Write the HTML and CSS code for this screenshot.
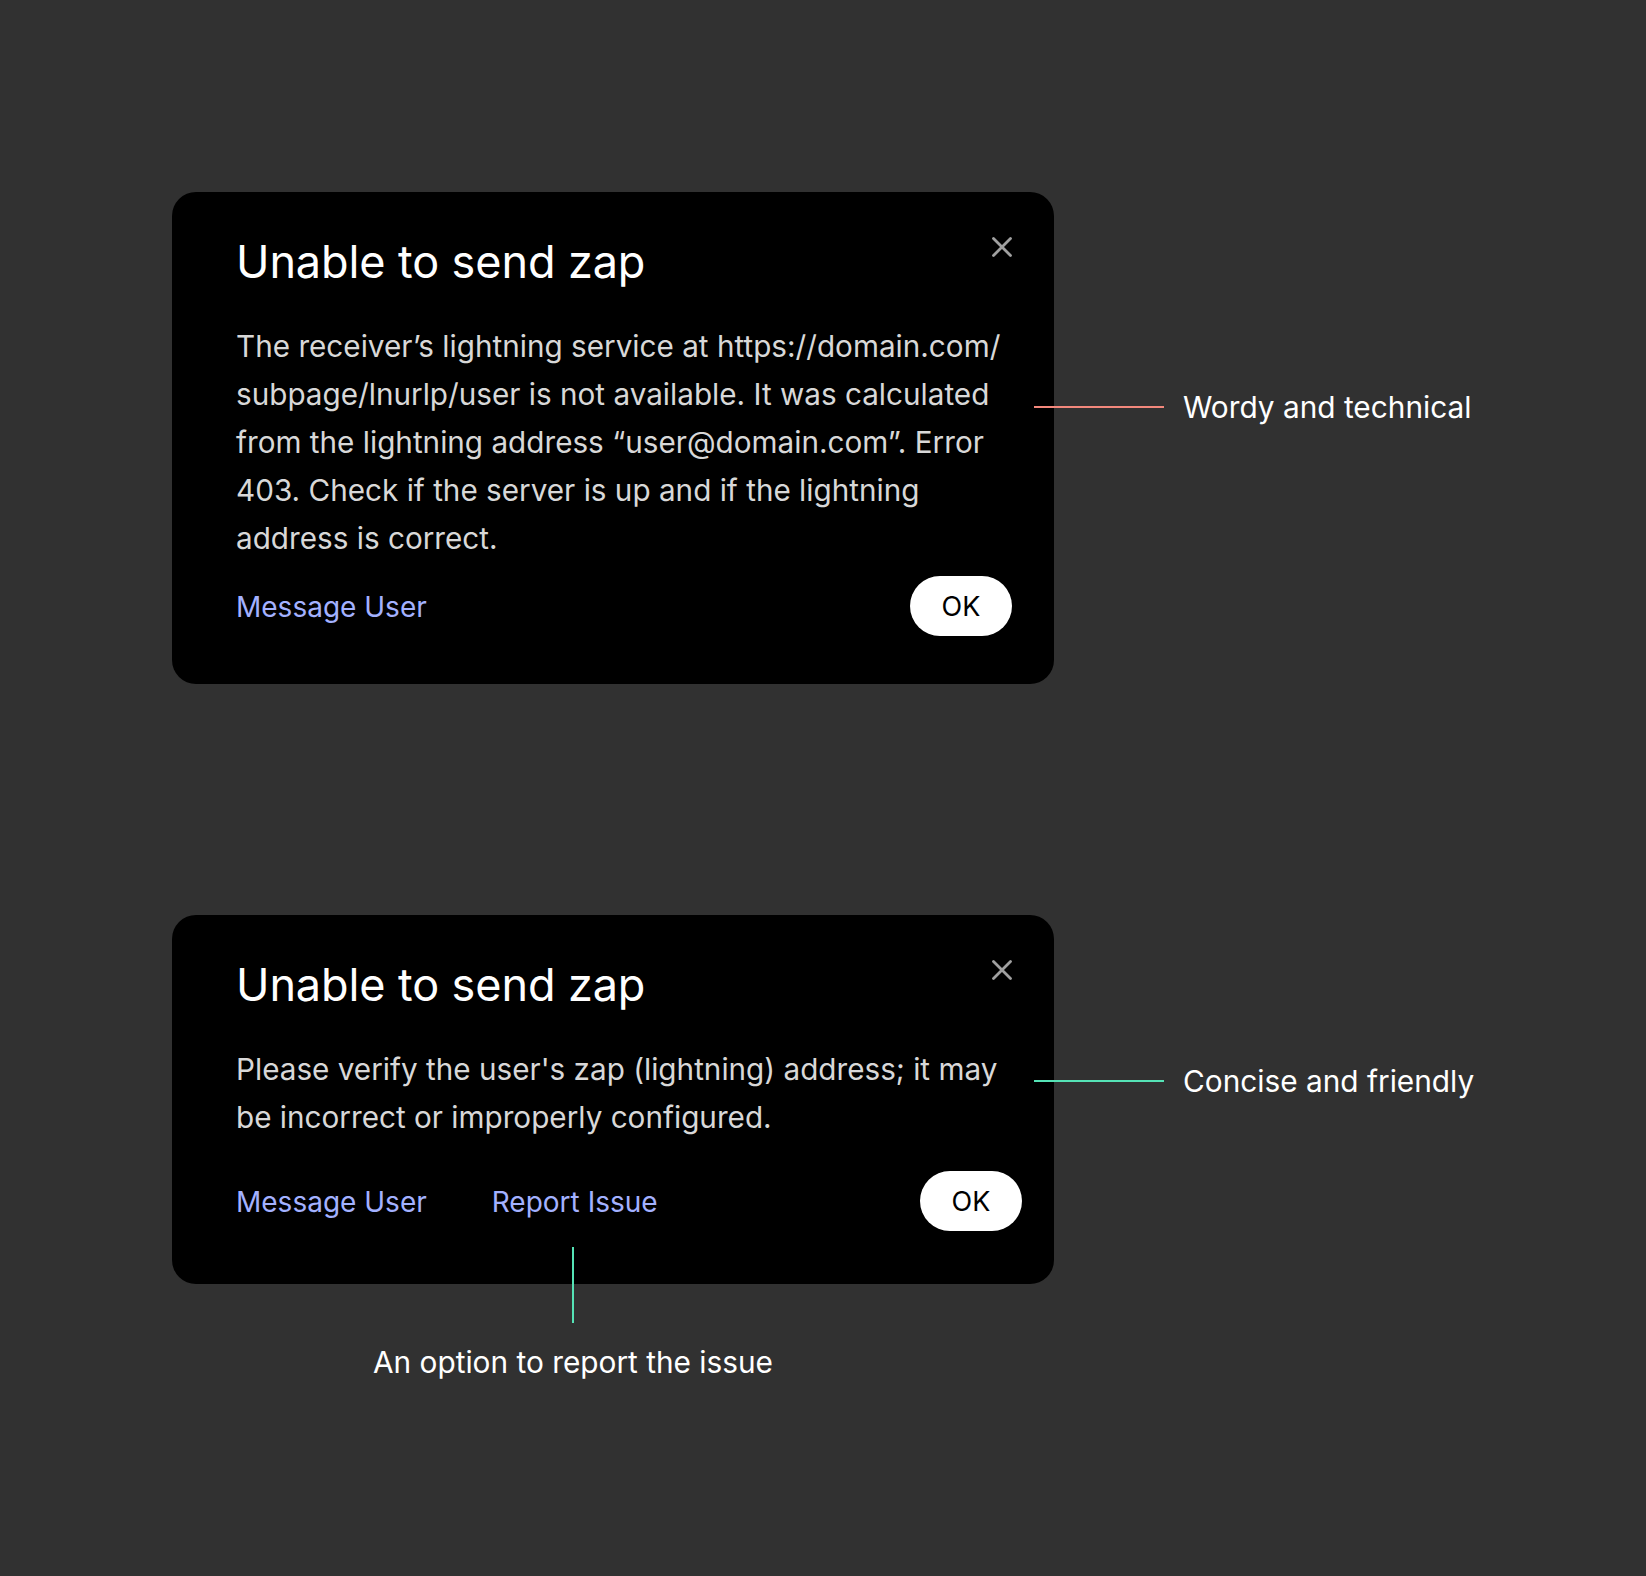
FILE: index.html
```html
<!DOCTYPE html>
<html lang="en">
<head>
    <meta charset="UTF-8">
    <title>Zap error copy - before and after</title>
    <link rel="stylesheet" href="styles.css">
</head>
<body>

    <div class="page">

        <!-- Before -->
        <div class="row">
            <div class="card">
                <div class="card-head">
                    <h2 class="card-title">Unable to send zap</h2>
                    <button class="close" aria-label="Close">
                        <svg width="20" height="20" viewBox="0 0 20 20"><path d="M1.5 1.5L18.5 18.5M18.5 1.5L1.5 18.5" stroke="#a0a0a0" stroke-width="2.8" stroke-linecap="round"/></svg>
                    </button>
                </div>
                <p class="card-text">The receiver’s lightning service at https://domain.com/<br>subpage/lnurlp/user is not available. It was calculated<br>from the lightning address “user@domain.com”. Error<br>403. Check if the server is up and if the lightning<br>address is correct.</p>
                <div class="card-foot">
                    <div class="links">
                        <a href="#">Message User</a>
                    </div>
                    <button class="ok">OK</button>
                </div>
            </div>
            <div class="note note-red">
                <span class="note-line"></span>
                <span class="note-text">Wordy and technical</span>
            </div>
        </div>

        <!-- After -->
        <div class="row row-after">
            <div class="stack">
                <div class="card card-short">
                    <div class="card-head">
                        <h2 class="card-title">Unable to send zap</h2>
                        <button class="close" aria-label="Close">
                            <svg width="20" height="20" viewBox="0 0 20 20"><path d="M1.5 1.5L18.5 18.5M18.5 1.5L1.5 18.5" stroke="#a0a0a0" stroke-width="2.8" stroke-linecap="round"/></svg>
                        </button>
                    </div>
                    <p class="card-text">Please verify the user's zap (lightning) address; it may<br>be incorrect or improperly configured.</p>
                    <div class="card-foot">
                        <div class="links">
                            <a href="#">Message User</a>
                            <a href="#">Report Issue</a>
                        </div>
                        <button class="ok">OK</button>
                    </div>
                </div>
                <div class="note-below">
                    <span class="note-vline"></span>
                    <span class="note-text">An option to report the issue</span>
                </div>
            </div>
            <div class="note note-green">
                <span class="note-line"></span>
                <span class="note-text">Concise and friendly</span>
            </div>
        </div>

    </div>

</body>
</html>
```

FILE: styles.css
```css
body {
    margin: 0;
    padding: 0;
    background-color: #313131;
    font-family: Inter, "Noto Sans", sans-serif;
    color: #fff;
}

.page {
    padding: 192px 0 0 172px;
}

.row {
    display: flex;
    align-items: flex-start;
}

.row-after {
    margin-top: 231px;
}

/* Dialog card */
.card {
    width: 882px;
    box-sizing: border-box;
    background-color: #000;
    border-radius: 24px;
    padding: 43px 42px 48px 64px;
}

.card-head {
    display: flex;
    justify-content: space-between;
    align-items: flex-start;
}

.card-title {
    margin: 0;
    font-size: 45px;
    font-weight: 400;
    line-height: 54px;
    letter-spacing: -0.1px;
    color: #fff;
}

.close {
    background: none;
    border: none;
    padding: 0;
    margin-top: 2px;
    width: 20px;
    height: 20px;
    cursor: pointer;
}

.close svg {
    display: block;
}

.card-text {
    margin: 33px 0 0 0;
    font-size: 29.7px;
    line-height: 48px;
    color: #d8d8d8;
}

.card-foot {
    display: flex;
    justify-content: space-between;
    align-items: center;
    margin-top: 14px;
}

.card-short .card-foot {
    margin-top: 30px;
    margin-right: -10px;
}

.card-short {
    padding-bottom: 53px;
}

.links {
    display: flex;
    gap: 65px;
    padding-top: 2px;
}

.links a {
    font-size: 28px;
    color: #a3b1ff;
    text-decoration: none;
}

.ok {
    width: 102px;
    height: 60px;
    border: none;
    border-radius: 30px;
    background-color: #fff;
    color: #000;
    font-family: inherit;
    font-size: 27px;
    cursor: pointer;
}

/* Annotations */
.note {
    display: flex;
    align-items: center;
    gap: 19px;
    margin-left: -20px;
}

.note-red {
    margin-top: 197px;
}

.note-green {
    margin-top: 148px;
}

.note-line {
    width: 130px;
    height: 2px;
}

.note-red .note-line {
    background-color: #f3887c;
}

.note-green .note-line {
    background-color: #55e3b6;
}

.note-text {
    font-size: 29.8px;
    line-height: 36px;
    color: #fff;
}

.note-below {
    width: 802px;
    display: flex;
    flex-direction: column;
    align-items: center;
    margin-top: -37px;
}

.note-vline {
    width: 2px;
    height: 76px;
    background-color: #55e3b6;
    margin-bottom: 21px;
}
```
